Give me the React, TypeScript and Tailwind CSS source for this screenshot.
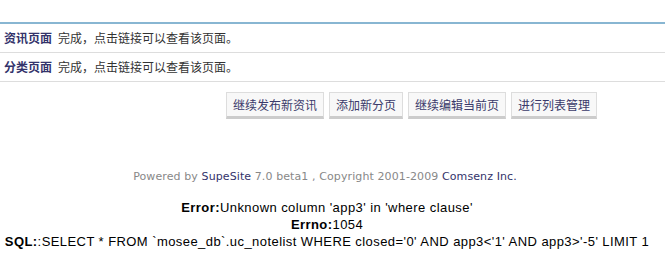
const rows = [
  { title: "资讯页面", text: "完成，点击链接可以查看该页面。" },
  { title: "分类页面", text: "完成，点击链接可以查看该页面。" },
];

const buttons = ["继续发布新资讯", "添加新分页", "继续编辑当前页", "进行列表管理"];

const cjk = "font-['SimSun','Noto_Sans_CJK_SC',sans-serif]";

export default function App() {
  return (
    <div className="w-[665px] h-[270px] bg-white overflow-hidden">
      {/* result table */}
      <div className={`mt-[22px] border-t-2 border-[#88b6d2] ${cjk} text-[12px]`}>
        {rows.map((r) => (
          <div key={r.title} className="flex items-center h-[29px] border-b border-[#dddddd] pl-[4px]">
            <span className="font-bold text-[#33336b]">{r.title}</span>
            <span className="ml-[6px] text-[#333333]">{r.text}</span>
          </div>
        ))}
      </div>

      {/* action buttons */}
      <div className={`mt-[10px] flex gap-[5px] pl-[226px] ${cjk} text-[12px]`}>
        {buttons.map((b) => (
          <button
            key={b}
            className="h-[27px] px-[6px] bg-[#f8f8f8] border border-[#dddddd] border-b-[3px] border-b-[#cccccc] text-[#3a3a6a]"
          >
            {b}
          </button>
        ))}
      </div>

      {/* footer */}
      <p className="mt-[51px] pr-[15px] text-center font-['DejaVu_Sans',sans-serif] text-[11px] leading-[14px] tracking-[0.1px] text-[#888888]">
        Powered by <span className="text-[#33336b]">SupeSite</span> 7.0 beta1 , Copyright 2001-2009{" "}
        <span className="text-[#33336b]">Comsenz Inc.</span>
      </p>

      {/* sql error */}
      <div className="mt-[15px] pr-[11px] text-center font-['Liberation_Sans',sans-serif] text-[13px] leading-[17px] tracking-[0.43px] text-black">
        <p>
          <b>Error:</b>Unknown column 'app3' in 'where clause'
        </p>
        <p>
          <b>Errno:</b>1054
        </p>
        <p className="whitespace-nowrap">
          <b>SQL:</b>:SELECT * FROM `mosee_db`.uc_notelist WHERE closed='0' AND app3&lt;'1' AND app3&gt;'-5' LIMIT 1
        </p>
      </div>
    </div>
  );
}
